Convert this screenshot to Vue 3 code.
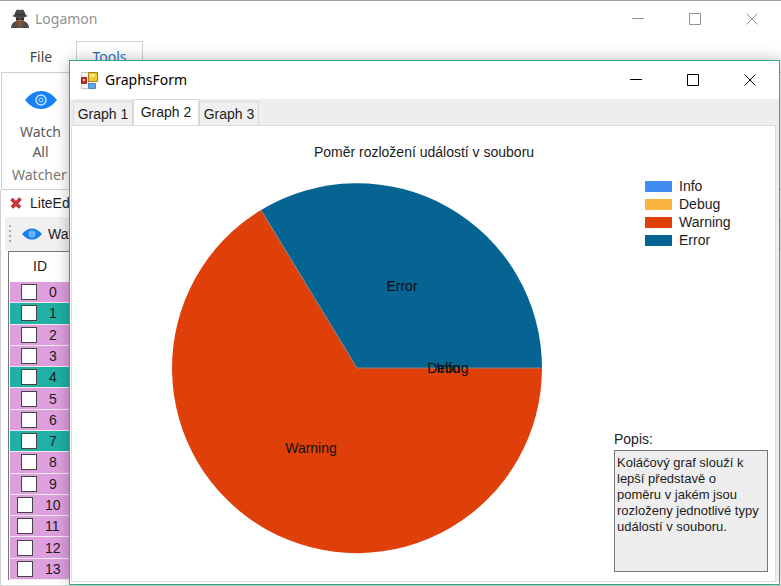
<script setup>
import { ref } from 'vue'

const rows = Array.from({ length: 14 }, (_, id) => ({ id, active: [1, 4, 7].includes(id) }))
const tabs = ['Graph 1', 'Graph 2', 'Graph 3']
const current = ref(1)
const legend = [
  { name: 'Info', tone: 'info' },
  { name: 'Debug', tone: 'debug' },
  { name: 'Warning', tone: 'warning' },
  { name: 'Error', tone: 'error' }
]
const description = ref('Koláčový graf slouží k lepší představě o poměru v jakém jsou rozloženy jednotlivé typy událostí v souboru.')
const controls = [
  { name: 'Minimize', d: 'M0 5.5H12' },
  { name: 'Maximize', d: 'M.5 .5H11.5V11.5H.5Z' },
  { name: 'Close', d: 'M.5 .5L11.5 11.5M11.5 .5L.5 11.5' }
]
</script>

<template>
  <div class="desktop">
    <main class="main-window">
      <header class="titlebar main-title">
        <svg class="app-icon" viewBox="0 0 20 20" aria-hidden="true">
          <path d="M1 19Q1 14 6 12L14 12Q19 14 19 19Z" fill="#4a494d" />
          <path d="M6 7H14V12L10 16L6 12Z" fill="#a06a48" />
          <path d="M6 11.500Q10 13 14 11.500L13.500 15L11.500 19H8.500L6.500 15Z" fill="#7a5238" />
          <path d="M6 8.500H9.500V11H6ZM10.500 8.500H14V11H10.500Z" fill="#2c2a2e" />
          <path d="M2 7Q5 6 5.500 3Q6 0 8 .5Q10 1.500 12 .5Q14 0 14.500 3Q15 6 18 7Q14 9 10 9Q6 9 2 7Z" fill="#4b4a4f" />
          <path d="M5 5Q10 7 15 5" stroke="#2a2a2a" fill="none" />
        </svg>
        <h1>Logamon</h1>
        <div class="controls">
          <button v-for="c in controls" :key="c.name" type="button" :aria-label="c.name">
            <svg viewBox="0 0 12 12" aria-hidden="true"><path :d="c.d" /></svg>
          </button>
        </div>
      </header>
      <nav class="ribbon-tabs">
        <button type="button">File</button>
        <button type="button" class="selected">Tools</button>
      </nav>
      <section class="ribbon">
        <button type="button" class="watch-all">
          <svg class="eye-large" viewBox="0 0 32 18" aria-hidden="true">
            <path d="M0 9Q7 0 16 0T32 9Q25 18 16 18T0 9Z" fill="#1682f5" />
            <circle cx="16" cy="9" r="5" fill="none" stroke="#c5e1ff" stroke-width="1.500" />
            <circle cx="16" cy="9" r="2" fill="none" stroke="#c5e1ff" />
          </svg>
          <span>Watch<br>All</span>
        </button>
        <p>Watcher</p>
      </section>
      <section class="document">
        <div class="document-tab">
          <svg class="cross" viewBox="0 0 12 12" aria-hidden="true">
            <path d="M1.500 2L10 10.500M10.500 1.500L2 10.500" stroke="#a83034" stroke-width="3.500" />
            <path d="M2 2L10 10M10 2L2 10" stroke="#dc3034" stroke-width="2" />
          </svg>
          <span>LiteEdit</span>
        </div>
        <div class="toolbar">
          <span class="grip"></span>
          <svg class="eye-small" viewBox="0 0 32 18" aria-hidden="true">
            <path d="M0 9Q7 0 16 0T32 9Q25 18 16 18T0 9Z" fill="#1682f5" />
            <circle cx="16" cy="9" r="5" fill="#65aff9" stroke="#a8d2ff" />
          </svg>
          <span>Watch</span>
        </div>
        <table>
          <thead>
            <tr><th>ID</th></tr>
          </thead>
          <tbody>
            <tr v-for="row in rows" :key="row.id" :class="{ active: row.active }">
              <td>
                <label :class="{ wide: row.id > 9 }"><input type="checkbox"><span>{{ row.id }}</span></label>
              </td>
            </tr>
          </tbody>
        </table>
      </section>
    </main>

    <section class="graph-window">
      <header class="titlebar graph-title">
        <svg class="form-icon" viewBox="0 0 17 17" aria-hidden="true">
          <path d="M.5 .5H7.500V16.500H.5Z" fill="#f5f5f5" stroke="#c8c8c8" />
          <path d="M.5 5.500H5.500V11.500H.5Z" fill="#c92f2b" stroke="#9d2522" />
          <path d="M2 7H4V9H2Z" fill="#f3b9b4" />
          <path d="M7.500 .5H16.500V9.500H7.500Z" fill="#f4c72f" stroke="#a67c17" />
          <path d="M9 2H14V5H9Z" fill="#ffe681" />
          <path d="M7.500 11.500H14.500V16.500H7.500Z" fill="#6ca1e5" stroke="#4f83d0" />
        </svg>
        <h2>GraphsForm</h2>
        <div class="controls">
          <button v-for="c in controls" :key="c.name" type="button" :aria-label="c.name">
            <svg viewBox="0 0 12 12" aria-hidden="true"><path :d="c.d" /></svg>
          </button>
        </div>
      </header>
      <div class="tab-strip" role="tablist">
        <button
          v-for="(tab, i) in tabs"
          :key="tab"
          type="button"
          role="tab"
          :aria-selected="current === i"
          :class="{ selected: current === i }"
          @click="current = i"
        >{{ tab }}</button>
      </div>
      <div class="page" role="tabpanel">
        <h3>Poměr rozložení událostí v souboru</h3>
        <div class="page-body">
          <svg class="pie" viewBox="0 0 370 370" role="img" aria-label="Poměr rozložení událostí v souboru">
            <path d="M185 185L89 27A185 185 0 1 0 370 185Z" fill="#df400a" />
            <path d="M185 185L89 27A185 185 0 0 1 370 185Z" fill="#056492" />
            <path d="M89 27L185 185H370" fill="none" stroke="#8a8580" />
            <text x="230" y="108">Error</text>
            <text x="139" y="270">Warning</text>
            <text x="276" y="190">Debug</text>
            <text x="276" y="190">Info</text>
          </svg>
          <aside>
            <ul>
              <li v-for="item in legend" :key="item.name">
                <i :class="item.tone"></i>{{ item.name }}
              </li>
            </ul>
            <div class="note">
              <label for="note">Popis:</label>
              <textarea id="note" v-model="description" readonly></textarea>
            </div>
          </aside>
        </div>
      </div>
    </section>
  </div>
</template>

<style>
body {
  background: #fff;
}
</style>

<style scoped>
* {
  box-sizing: border-box;
}

.desktop {
  position: relative;
  min-height: 100vh;
  overflow: hidden;
  font: 14px/16px "Liberation Sans", sans-serif;
  color: #1c1c1c;
}

h1, h2, h3, p, ul {
  margin: 0;
  padding: 0;
  font-weight: normal;
}

button {
  padding: 0;
  border: 0;
  background: none;
  font: inherit;
  color: inherit;
}

.main-window {
  display: flex;
  flex-direction: column;
  min-height: 100vh;
  border-top: 1px solid #a0a0a0;
  border-bottom: 1px solid #d8d8d8;
}

.titlebar {
  display: flex;
  align-items: center;
  font-family: "Noto Sans", sans-serif;
}

.titlebar h1, .titlebar h2 {
  flex: 1;
  font-size: 14px;
  line-height: 20px;
}

.main-title {
  height: 36px;
  padding: 0 23px 0 10px;
  gap: 5px;
  color: #929292;
}

.app-icon {
  width: 20px;
  height: 20px;
}

.controls {
  display: flex;
  gap: 45px;
}

.controls button {
  display: flex;
}

.controls svg {
  width: 12px;
  height: 12px;
}

.controls path {
  fill: none;
  stroke: currentColor;
}

.ribbon-tabs {
  display: flex;
  height: 35px;
  padding: 4px 0 0 6px;
  font: 14px/20px "Noto Sans", sans-serif;
  color: #444;
}

.ribbon-tabs button {
  width: 70px;
  border: 1px solid transparent;
  border-bottom: 0;
}

.ribbon-tabs .selected {
  width: 67px;
  border-color: #d0d0d0;
  color: #2a72bd;
}

.ribbon {
  display: flex;
  flex-direction: column;
  height: 118px;
  padding: 18px 0 0;
  border: 1px solid #d0d0d0;
  border-right: 0;
  margin-left: 1px;
  font: 14px/20px "Noto Sans", sans-serif;
  color: #5c5c5c;
}

.watch-all {
  display: flex;
  flex-direction: column;
  align-items: center;
  width: 77px;
  gap: 13px;
}

.eye-large {
  width: 32px;
  height: 18px;
}

.ribbon p {
  padding: 3px 0 0 10px;
  color: #777;
}

.document {
  flex: 1;
  border-left: 1px solid #d0d0d0;
  padding-left: 4px;
}

.document-tab {
  display: flex;
  align-items: center;
  height: 27px;
  gap: 8px;
  padding: 0 0 2px 5px;
}

.cross {
  width: 12px;
  height: 12px;
}

.toolbar {
  display: flex;
  align-items: center;
  height: 34px;
  padding-left: 4px;
  background: #f0f0f0;
}

.grip {
  width: 2px;
  height: 18px;
  margin-right: 11px;
  background: repeating-linear-gradient(#aaa 0 2px, transparent 2px 5px);
}

.eye-small {
  width: 20px;
  height: 12px;
  margin-right: 6px;
}

/* The rows share the grid's height evenly. */
table {
  width: calc(100% - 4px);
  height: 329px;
  margin-left: 3px;
  border-collapse: separate;
  border-spacing: 0;
  border: 1px solid #777;
  border-bottom: 0;
}

th {
  height: 30px;
  padding: 0 0 2px 24px;
  text-align: left;
  font-weight: normal;
}

td {
  height: 21px;
  padding: 0 0 0 11px;
  border-bottom: 1px solid #f4eaf4;
  border-left: 1px solid #fff;
  background: #dd9fdd;
}

.active td {
  background: #20b0a4;
}

td label {
  display: flex;
  align-items: center;
  gap: 12px;
}

td .wide {
  margin-left: -4px;
}

td input {
  appearance: none;
  width: 16px;
  height: 16px;
  margin: 0;
  border: 1px solid #444;
  background: #fff;
}

.graph-window {
  position: absolute;
  inset: 60px 1px 1px 69px;
  display: flex;
  flex-direction: column;
  border: 1px solid #32a78d;
  background: #fff;
  box-shadow: 0 0 14px rgb(0 0 0 / 28%);
}

.graph-title {
  height: 38px;
  padding: 0 23px 0 11px;
  gap: 7px;
  color: #000;
}

.form-icon {
  width: 17px;
  height: 17px;
}

.tab-strip {
  display: flex;
  align-items: flex-end;
  height: 26px;
  padding-left: 3px;
  background: #eee;
}

.tab-strip button {
  height: 24px;
  width: 60px;
  border: 1px solid #d9d9d9;
  border-bottom: 0;
  background: #f0f0f0;
}

.tab-strip .selected {
  height: 26px;
  width: 66px;
  padding-bottom: 2px;
  background: #fff;
}

.page {
  flex: 1;
  margin: 0 3px 2px 1px;
  padding: 18px 7px 9px 8px;
  border: 1px solid #dcdcdc;
  box-shadow: 3px 0 #eee;
  display: flex;
  flex-direction: column;
  gap: 23px;
}

h3 {
  text-align: center;
  font-size: 14px;
  line-height: 16px;
}

.page-body {
  flex: 1;
  display: grid;
  grid-template-columns: minmax(0, 1fr) 154px;
}

.pie {
  width: 100%;
  max-width: 370px;
  height: auto;
  justify-self: center;
  margin-left: 19px;
  overflow: visible;
}

.pie text {
  text-anchor: middle;
  font-size: 14px;
  fill: #101010;
}

aside {
  display: flex;
  flex-direction: column;
  justify-content: space-between;
}

ul {
  display: flex;
  flex-direction: column;
  padding-left: 31px;
  margin-top: -6px;
  list-style: none;
}

li {
  display: flex;
  align-items: center;
  gap: 7px;
  height: 18px;
}

li i {
  width: 27px;
  height: 11px;
}

.info { background: #418cf0; }
.debug { background: #fcb441; }
.warning { background: #df400a; }
.error { background: #056492; }

.note {
  display: flex;
  flex-direction: column;
  gap: 3px;
}

textarea {
  height: 122px;
  padding: 4px 6px 4px 2px;
  border: 1px solid #777;
  border-radius: 0;
  background: #eee;
  color: inherit;
  font: inherit;
  font-size: 13px;
  resize: none;
  outline: 0;
}
</style>
